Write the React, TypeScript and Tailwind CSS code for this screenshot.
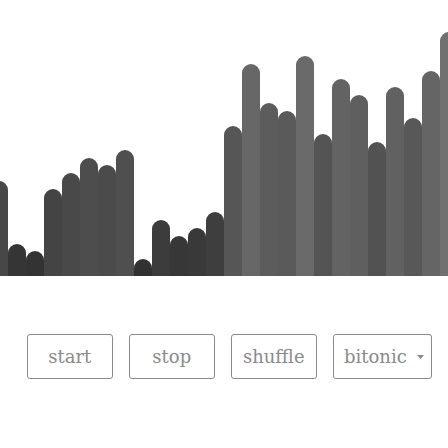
const heights = [95, 32, 25, 87, 103, 118, 111, 126, 17, 56, 40, 48, 64, 150, 212, 173, 165, 220, 142, 197, 181, 134, 189, 158, 205, 244];

const shade = (h: number) => {
  const v = Math.round(44 + h * 0.28);
  return `rgb(${v},${v},${v})`;
};

export default function App() {
  return (
    <div className="w-[448px] h-[448px] bg-white overflow-hidden" style={{ fontFamily: '"DejaVu Serif", serif' }}>
      <div className="h-[276px] flex items-end justify-center overflow-hidden">
        {heights.map((h, i) => (
          <div
            key={i}
            className="w-[18px] shrink-0 rounded-t-[9px]"
            style={{ height: h, backgroundColor: shade(h) }}
          />
        ))}
      </div>
      <div className="flex mt-[58px] pl-[27px] gap-[16.5px] text-[18px] text-[#8a8a8a]">
        <button className="w-[85.5px] h-[45px] border border-[#8a8a8a] rounded-[3px] flex items-center justify-center">start</button>
        <button className="w-[85.5px] h-[45px] border border-[#8a8a8a] rounded-[3px] flex items-center justify-center">stop</button>
        <button className="w-[85.5px] h-[45px] border border-[#8a8a8a] rounded-[3px] flex items-center justify-center">shuffle</button>
        <div className="w-[99px] h-[45px] border border-[#8a8a8a] rounded-[3px] flex items-center pl-[10px]">
          <span>bitonic</span>
          <svg width="7" height="4" viewBox="0 0 7 4" className="ml-[10px] mt-[1px]">
            <path d="M0 0 L7 0 L3.5 4 Z" fill="#8a8a8a" />
          </svg>
        </div>
      </div>
    </div>
  );
}
